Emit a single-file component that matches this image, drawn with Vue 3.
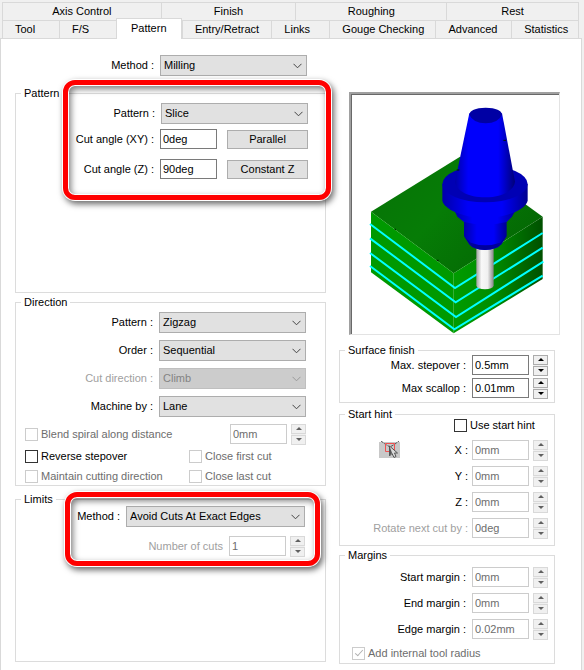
<template>
  <div class="dialog">
    <div class="tabs" role="tablist">
      <div class="tab-row">
        <button
          v-for="t in backTabs"
          :key="t.name"
          type="button"
          role="tab"
          class="tab tab--back"
          :style="{ flexGrow: t.size }"
          :aria-selected="active === t.name"
          @click="active = t.name"
        >{{ t.name }}</button>
      </div>
      <div class="tab-row">
        <button
          v-for="t in frontTabs"
          :key="t.name"
          type="button"
          role="tab"
          class="tab"
          :class="{ 'tab--active': active === t.name }"
          :style="{ flexGrow: t.size }"
          :aria-selected="active === t.name"
          @click="active = t.name"
        >{{ t.name }}</button>
      </div>
    </div>

    <div class="panel" role="tabpanel">
      <div class="col col--left">
        <div class="row row--method">
          <label for="method">Method :</label>
          <span class="combo">
            <select id="method" v-model="form.method">
              <option>Milling</option>
              <option>Turning</option>
            </select>
            <svg class="chevron" viewBox="0 0 9 6"><path d="M0.5 0.8 4.5 4.8 8.5 0.8" /></svg>
          </span>
        </div>

        <fieldset class="group group--pattern">
          <legend>Pattern</legend>
          <div class="highlighted">
            <div class="row">
              <label for="pattern">Pattern :</label>
              <span class="combo">
                <select id="pattern" v-model="form.pattern">
                  <option>Slice</option>
                  <option>Offset</option>
                </select>
                <svg class="chevron" viewBox="0 0 9 6"><path d="M0.5 0.8 4.5 4.8 8.5 0.8" /></svg>
              </span>
            </div>
            <div v-for="a in angles" :key="a.id" class="row row--angle">
              <label :for="a.id">{{ a.label }} :</label>
              <input :id="a.id" v-model="a.value" type="text" class="field">
              <button type="button" class="push" @click="a.value = a.preset">{{ a.action }}</button>
            </div>
            <span class="ring ring--pattern"></span>
          </div>
        </fieldset>

        <fieldset class="group group--direction">
          <legend>Direction</legend>
          <div v-for="d in directions" :key="d.id" class="row row--combo">
            <label :for="d.id" :class="{ faint: d.disabled }">{{ d.label }} :</label>
            <span class="combo">
              <select :id="d.id" v-model="d.value" :disabled="d.disabled">
                <option v-for="o in d.options" :key="o">{{ o }}</option>
              </select>
              <svg class="chevron" viewBox="0 0 9 6"><path d="M0.5 0.8 4.5 4.8 8.5 0.8" /></svg>
            </span>
          </div>
          <div class="row row--blend">
            <label class="check check--grow">
              <input type="checkbox" disabled>
              <span>Blend spiral along distance</span>
            </label>
            <input type="text" class="field" value="0mm" aria-label="Blend distance" disabled>
            <span class="spin">
              <button type="button" aria-label="Increase" disabled></button>
              <button type="button" aria-label="Decrease" disabled></button>
            </span>
          </div>
          <div class="checks">
            <label v-for="c in checks" :key="c.label" class="check">
              <input v-model="c.on" type="checkbox" :disabled="c.disabled">
              <span>{{ c.label }}</span>
            </label>
          </div>
        </fieldset>

        <fieldset class="group group--limits">
          <legend>Limits</legend>
          <div class="highlighted">
            <div class="row">
              <label for="limit-method">Method :</label>
              <span class="combo combo--wide">
                <select id="limit-method" v-model="form.limit">
                  <option>Avoid Cuts At Exact Edges</option>
                  <option>Exact Edges</option>
                  <option>Limit By Points</option>
                </select>
                <svg class="chevron" viewBox="0 0 9 6"><path d="M0.5 0.8 4.5 4.8 8.5 0.8" /></svg>
              </span>
            </div>
            <div class="row row--cuts">
              <label for="cuts" class="faint">Number of cuts</label>
              <input id="cuts" type="text" class="field" value="1" disabled>
              <span class="spin">
                <button type="button" aria-label="Increase" disabled></button>
                <button type="button" aria-label="Decrease" disabled></button>
              </span>
            </div>
            <span class="ring ring--limits"></span>
          </div>
        </fieldset>
      </div>

      <div class="col col--right">
        <div class="preview">
          <svg viewBox="36 45 621 717" role="img" aria-label="Tool cutting a block in slices">
            <defs>
              <linearGradient id="face-top" x1="0" y1="0" x2="1" y2="0.6">
                <stop offset="0" stop-color="#067206" />
                <stop offset="0.5" stop-color="#067c06" />
                <stop offset="1" stop-color="#046804" />
              </linearGradient>
              <linearGradient id="face-right" x1="0" y1="0" x2="1" y2="0">
                <stop offset="0" stop-color="#009c00" />
                <stop offset="0.45" stop-color="#008c00" />
                <stop offset="1" stop-color="#005000" />
              </linearGradient>
              <linearGradient id="cone" x1="0" y1="0" x2="1" y2="0">
                <stop offset="0" stop-color="#0000a8" />
                <stop offset="0.22" stop-color="#0000fc" />
                <stop offset="0.72" stop-color="#0000fc" />
                <stop offset="1" stop-color="#000078" />
              </linearGradient>
              <linearGradient id="flange" x1="0" y1="0" x2="1" y2="0">
                <stop offset="0" stop-color="#0000a8" />
                <stop offset="0.3" stop-color="#0000f8" />
                <stop offset="0.7" stop-color="#0000f8" />
                <stop offset="1" stop-color="#000090" />
              </linearGradient>
              <linearGradient id="shank" x1="0" y1="0" x2="1" y2="0">
                <stop offset="0" stop-color="#a0a0a0" />
                <stop offset="0.3" stop-color="#f8f8f8" />
                <stop offset="0.65" stop-color="#f0f0f0" />
                <stop offset="1" stop-color="#858585" />
              </linearGradient>
            </defs>
            <path d="M93 395 360 230 608 410 341 580Z" fill="url(#face-top)" />
            <path d="M93 395 341 580V760L93 577Z" fill="#009900" />
            <path d="M341 580 608 410V597L341 760Z" fill="url(#face-right)" />
            <g fill="none" stroke="#00ffff" stroke-width="6">
              <path d="M90 432 345 624 608 459" />
              <path d="M90 475 347 667 608 503" />
              <path d="M90 519 348 711 610 545" />
              <path d="M90 558 343 748 608 587" />
            </g>
            <path d="M409 495V617Q412 627 435 628 458 627 461 617V495Z" fill="url(#shank)" />
            <path d="M372 410V468L388 493Q400 509 435 510 470 509 484 493L500 468V410Z" fill="url(#flange)" />
            <path d="M372 468 388 493Q400 509 435 510 470 509 484 493L500 468 480 488Q435 504 392 488Z" fill="#00009c" />
            <path d="M340 385 352 410 372 426Q435 441 500 426L516 410 530 385Z" fill="url(#flange)" />
            <path d="M307 312V362C312 385 360 412 435 414 510 412 558 385 563 362V312Z" fill="url(#flange)" />
            <ellipse cx="435" cy="312" rx="128" ry="55" fill="#0000b4" />
            <path d="M388 100 345 305C348 332 385 352 435 352 485 352 522 332 525 305L486 100Z" fill="url(#cone)" />
            <path d="M388 104Q390 84 437 83 484 84 486 104 475 129 437 130 399 129 388 104Z" fill="#0000a4" />
            <path d="M164 448h4M290 541h6M350 270h8M490 181h8" stroke="#001800" stroke-width="3" />
          </svg>
        </div>

        <fieldset class="group group--surface">
          <legend>Surface finish</legend>
          <div v-for="f in surface" :key="f.id" class="row">
            <label :for="f.id">{{ f.label }} :</label>
            <input :id="f.id" v-model="f.value" type="text" class="field">
            <span class="spin">
              <button type="button" :aria-label="`Increase ${f.label}`" @click="step(f, 1)"></button>
              <button type="button" :aria-label="`Decrease ${f.label}`" @click="step(f, -1)"></button>
            </span>
          </div>
        </fieldset>

        <fieldset class="group group--hint">
          <legend>Start hint</legend>
          <label class="check check--hint">
            <input v-model="form.useHint" type="checkbox">
            <span>Use start hint</span>
          </label>
          <div class="hint-body">
            <button type="button" class="pick" aria-label="Pick start point" :disabled="!form.useHint">
              <svg viewBox="0 0 21 17">
                <path d="M0 1H21V17H0Z" fill="#c8c8c8" />
                <path d="M2 0 6 3 11 6 16 3 20 0" fill="none" stroke="#555" stroke-dasharray="3 1" />
                <path d="M6.5 2.5H15.5V10.5H6.5Z" fill="none" stroke="#f05050" />
                <path d="M10.5 5V15L13 12.5 15 16.5 17 15.5 15.5 12H18.5Z" fill="#d8d8d8" stroke="#555" />
                <path d="M10.5 5V15L13 12Z" fill="#555" />
              </svg>
            </button>
            <div v-for="f in hint" :key="f.id" class="row">
              <label :for="f.id" :class="{ faint: f.faint }">{{ f.label }} :</label>
              <input :id="f.id" v-model="f.value" type="text" class="field" :disabled="!form.useHint">
              <span class="spin">
                <button type="button" :aria-label="`Increase ${f.label}`" :disabled="!form.useHint" @click="step(f, 1)"></button>
                <button type="button" :aria-label="`Decrease ${f.label}`" :disabled="!form.useHint" @click="step(f, -1)"></button>
              </span>
            </div>
          </div>
        </fieldset>

        <fieldset class="group group--margins">
          <legend>Margins</legend>
          <div v-for="f in margins" :key="f.id" class="row">
            <label :for="f.id">{{ f.label }} :</label>
            <input :id="f.id" v-model="f.value" type="text" class="field" disabled>
            <span class="spin">
              <button type="button" :aria-label="`Increase ${f.label}`" disabled></button>
              <button type="button" :aria-label="`Decrease ${f.label}`" disabled></button>
            </span>
          </div>
          <label class="check check--radius">
            <input type="checkbox" checked disabled>
            <span>Add internal tool radius</span>
          </label>
        </fieldset>
      </div>
    </div>
  </div>
</template>

<script setup>
import { ref, reactive } from 'vue'

const active = ref('Pattern')

// size is the tab's share of its row
const backTabs = [
  { name: 'Axis Control', size: 159 },
  { name: 'Finish', size: 135 },
  { name: 'Roughing', size: 151 },
  { name: 'Rest', size: 132 },
]
const frontTabs = [
  { name: 'Tool', size: 57 },
  { name: 'F/S', size: 57 },
  { name: 'Pattern', size: 65 },
  { name: 'Entry/Retract', size: 90 },
  { name: 'Links', size: 58 },
  { name: 'Gouge Checking', size: 107 },
  { name: 'Advanced', size: 76 },
  { name: 'Statistics', size: 67 },
]

const form = reactive({
  method: 'Milling',
  pattern: 'Slice',
  limit: 'Avoid Cuts At Exact Edges',
  useHint: false,
})

const angles = reactive([
  { id: 'angle-xy', label: 'Cut angle (XY)', value: '0deg', action: 'Parallel', preset: '0deg' },
  { id: 'angle-z', label: 'Cut angle (Z)', value: '90deg', action: 'Constant Z', preset: '90deg' },
])

const directions = reactive([
  { id: 'dir-pattern', label: 'Pattern', value: 'Zigzag', options: ['Zigzag', 'One way', 'Spiral'] },
  { id: 'dir-order', label: 'Order', value: 'Sequential', options: ['Sequential', 'Reverse'] },
  { id: 'dir-cut', label: 'Cut direction', value: 'Climb', options: ['Climb', 'Conventional'], disabled: true },
  { id: 'dir-machine', label: 'Machine by', value: 'Lane', options: ['Lane', 'Region'] },
])

const checks = reactive([
  { label: 'Reverse stepover', on: false },
  { label: 'Close first cut', on: false, disabled: true },
  { label: 'Maintain cutting direction', on: false, disabled: true },
  { label: 'Close last cut', on: false, disabled: true },
])

const surface = reactive([
  { id: 'stepover', label: 'Max. stepover', value: '0.5mm', by: 0.1 },
  { id: 'scallop', label: 'Max scallop', value: '0.01mm', by: 0.01 },
])

const hint = reactive([
  { id: 'hint-x', label: 'X', value: '0mm', by: 1 },
  { id: 'hint-y', label: 'Y', value: '0mm', by: 1 },
  { id: 'hint-z', label: 'Z', value: '0mm', by: 1 },
  { id: 'hint-rotate', label: 'Rotate next cut by', value: '0deg', by: 1, faint: true },
])

const margins = reactive([
  { id: 'margin-start', label: 'Start margin', value: '0mm' },
  { id: 'margin-end', label: 'End margin', value: '0mm' },
  { id: 'margin-edge', label: 'Edge margin', value: '0.02mm' },
])

function step(field, dir) {
  const unit = field.value.replace(/[-\d.]/g, '')
  const next = (parseFloat(field.value) || 0) + dir * field.by
  field.value = `${Number(next.toFixed(3))}${unit}`
}
</script>

<style>
body { background: #f0f0f0; }
</style>

<style scoped>
.dialog {
  box-sizing: border-box;
  display: flex;
  flex-direction: column;
  min-height: 100vh;
  padding: 2px 2px 0 0;
  font-family: 'Liberation Sans', Arial, sans-serif;
  font-size: 11px;
  line-height: 13px;
  color: #000;
}
.dialog *, .dialog *::before, .dialog *::after { box-sizing: border-box; }

button, input, select {
  margin: 0;
  font: inherit;
  color: inherit;
  border-radius: 0;
}

/* tabs */
.tabs { padding: 0 3px 0 2px; }
.tab-row { display: flex; height: 18px; }
.tab {
  flex: 1 1 0;
  min-width: 0;
  padding: 0;
  text-align: left;
  text-indent: 12px;
  white-space: nowrap;
  background: #f0f0f0;
  border: 1px solid #d9d9d9;
  border-width: 1px 0 0 1px;
}
.tab:last-child { border-right-width: 1px; }
.tab--back { text-align: center; text-indent: 0; }
.tab--active {
  position: relative;
  height: 21px;
  margin-top: -2px;
  padding-bottom: 2px;
  text-indent: 14px;
  background: #fff;
  border-right-width: 1px;
}

.panel {
  flex: 1;
  display: grid;
  grid-template-columns: 311fr 216fr;
  gap: 13px;
  padding: 16px 26px 5px 14px;
  background: #fff;
  border: 1px solid #d9d9d9;
  border-bottom: 0;
}
.col { display: flex; flex-direction: column; min-width: 0; }
.col--right { padding-top: 37px; }

/* groups */
.group {
  min-width: 0;
  margin: 0;
  padding: 0;
  border: 1px solid #dcdcdc;
}
.group legend {
  height: 10px;
  margin-left: 5px;
  padding: 0 3px;
  line-height: 10px;
}
.group--pattern { min-height: 205px; margin-top: 12px; padding: 5px 17px 0 0; }
.group--direction { margin-top: 4px; padding: 5px 19px 2px 0; }
.group--limits { min-height: 168px; margin-top: 8px; padding: 2px 20px 0 0; }
.group--surface { margin-top: 10px; padding: 0 6px 4px 0; }
.group--hint { margin-top: 6px; padding: 0 6px 7px 0; }
.group--margins { margin-top: 4px; padding: 7px 6px 3px 0; }

/* rows */
.row {
  display: flex;
  align-items: center;
  justify-content: flex-end;
  height: 20px;
}
.row > label:not(.check) { margin-right: 6px; white-space: nowrap; }
.row--method { height: 21px; padding-right: 19px; }
.row--angle { margin-top: 10px; }
.highlighted .row:first-child { height: 21px; }
.row:first-child + .row--angle { margin-top: 5px; }
.row--combo { height: 21px; margin-bottom: 7px; }
.row--blend { margin-bottom: 6px; padding-left: 9px; }
.row--cuts { margin-top: 9px; }
.faint { color: #a0a0a0; }

.combo { position: relative; width: 147px; height: 21px; }
.combo--wide { width: 179px; }
.combo select {
  display: block;
  width: 100%;
  height: 100%;
  padding: 0 20px 0 3px;
  appearance: none;
  background: #e1e1e1;
  border: 1px solid #adadad;
}
.combo select:disabled { color: #838383; background: #ccc; border-color: #bfbfbf; opacity: 1; }
.chevron {
  position: absolute;
  top: 8px;
  right: 5px;
  width: 9px;
  height: 6px;
  fill: none;
  stroke: #444;
  pointer-events: none;
}
select:disabled + .chevron { stroke: #999; }

.field {
  width: 57px;
  height: 20px;
  padding: 0 2px;
  background: #fff;
  border: 1px solid #7a7a7a;
}
.field:disabled { color: #6d6d6d; border-color: #ccc; }

.push {
  width: 81px;
  height: 19px;
  margin-left: 10px;
  padding: 0;
  background: #e1e1e1;
  border: 1px solid #adadad;
}
.push:active { background: #cce4f7; }

.spin {
  display: flex;
  flex-direction: column;
  gap: 1px;
  width: 15px;
  height: 21px;
  margin-left: 4px;
  background: #f0f0f0;
}
.spin button {
  display: flex;
  align-items: center;
  justify-content: center;
  width: 15px;
  height: 10px;
  padding: 0;
  background: #f0f0f0;
  border: 1px solid #acacac;
}
.spin button::before {
  content: '';
  border: solid transparent;
  border-width: 0 3px 3px;
  border-bottom-color: #000;
}
.spin button:last-child::before {
  border-width: 3px 3px 0;
  border-top-color: #000;
}
.spin button:disabled { border-color: #d9d9d9; }
.spin button:disabled::before { border-bottom-color: #606060; }
.spin button:last-child:disabled::before { border-top-color: #606060; }

/* checkboxes */
.check { display: flex; align-items: center; height: 13px; white-space: nowrap; }
.check--grow { flex: 1; }
.check input {
  position: relative;
  flex: none;
  width: 13px;
  height: 13px;
  margin-right: 3px;
  appearance: none;
  background: #fff;
  border: 1px solid #333;
}
.check input:disabled { border-color: #ccc; }
.check input:disabled + span { color: #6d6d6d; }
.check input:checked::after {
  content: '';
  position: absolute;
  top: 0;
  left: 4px;
  width: 4px;
  height: 8px;
  border: solid #333;
  border-width: 0 1px 1px 0;
  transform: rotate(42deg);
}
.check input:checked:disabled::after { border-color: #b0b0b0; }
.checks {
  display: grid;
  grid-template-columns: 164fr 117fr;
  gap: 7px 0;
  padding-left: 9px;
}
.check--hint { width: 100px; margin-left: auto; margin-right: -6px; }
.check--radius { margin-top: 8px; padding-left: 12px; }

/* red call-outs */
.highlighted { position: relative; }
.ring {
  position: absolute;
  border: 5px solid #f00;
  border-radius: 12px;
  box-shadow:
    0 0 0 1px #fff,
    2px 3px 6px 1px rgba(0, 0, 0, 0.6),
    inset 0 0 0 1px #fff,
    inset 2px 3px 6px 1px rgba(0, 0, 0, 0.5);
  pointer-events: none;
}
.ring--pattern { inset: -23px -23px -21px 47px; }
.ring--limits { inset: -14px -15px -10px 49px; }

.preview {
  margin: 0 -5px 0 10px;
  border: solid;
  border-width: 2px 1px 1px 2px;
  border-color: #a0a0a0 #e3e3e3 #e3e3e3 #a0a0a0;
  box-shadow: inset 1px 1px 0 #696969;
  padding: 1px 0 0 1px;
}
.preview svg { display: block; width: 100%; }

.group--surface .row + .row { margin-top: 3px; }
.hint-body { position: relative; margin-top: 8px; }
.hint-body .row + .row, .group--margins .row + .row { margin-top: 6px; }
.group--hint .row > label { margin-right: 4px; }
.pick {
  position: absolute;
  top: 1px;
  left: 39px;
  width: 21px;
  height: 17px;
  padding: 0;
  background: none;
  border: 0;
}
.pick svg { display: block; }
</style>
